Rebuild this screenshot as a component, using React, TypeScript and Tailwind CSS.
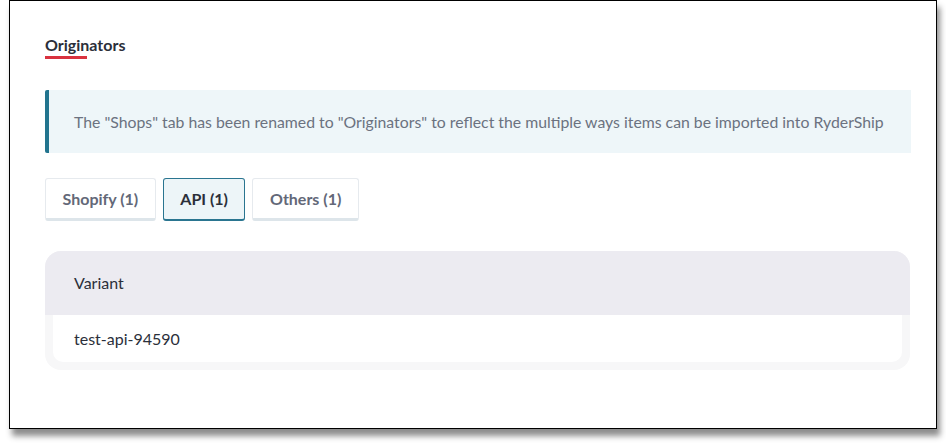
import React, { useState } from 'react';

const TABS = [
  { id: 'shopify', label: 'Shopify (1)' },
  { id: 'api', label: 'API (1)' },
  { id: 'others', label: 'Others (1)' },
];

const App: React.FC = () => {
  const [active, setActive] = useState('api');

  return (
    <div className="w-[946px] h-[447px] bg-white overflow-hidden" style={{ fontFamily: 'Lato, "Noto Sans", sans-serif' }}>
      <div className="ml-[9px] w-[928px] h-[429px] border border-black bg-white shadow-[3px_7px_6px_rgba(0,0,0,0.45)] pl-[35px] pr-[25px] pt-[35px]">
        <div className="w-fit">
          <h2 className="text-[16px] leading-[18px] font-bold text-[#2b2f3a]">Originators</h2>
          <div className="mt-[2px] h-[3px] w-[42px] bg-[#d9323f]" />
        </div>

        <div className="mt-[31px] h-[63px] bg-[#eef6f9] border-l-[4px] border-[#22748e] rounded-l-[2px] flex items-center pl-[25px]">
          <p className="text-[15.8px] text-[#6b7280] whitespace-nowrap">
            The "Shops" tab has been renamed to "Originators" to reflect the multiple ways items can be imported into RyderShip
          </p>
        </div>

        <div className="mt-[25px] flex gap-[7px]">
          {TABS.map((t) => (
            <button
              key={t.id}
              onClick={() => setActive(t.id)}
              className={`h-[43px] px-[16.5px] rounded-[3px] border text-[16px] font-bold ${
                t.id === active
                  ? 'bg-[#edf5f8] border-[#2a7590] border-b-[2px] text-[#2b2f3a]'
                  : 'bg-white border-[#e6eaee] border-b-[3px] border-b-[#dde5ea] text-[#636878]'
              }`}
            >
              {t.label}
            </button>
          ))}
        </div>

        <div className="mt-[30px] w-[865px] rounded-[16px] bg-[#f7f7f8] overflow-hidden pb-[8px]">
          <div className="h-[64px] bg-[#ecebf1] flex items-center pl-[29px] text-[16px] text-[#2b2f3a]">Variant</div>
          <div className="mx-[8px] h-[47px] bg-white rounded-b-[10px] flex items-center pl-[21px] text-[16px] text-[#2b2f3a]">
            test-api-94590
          </div>
        </div>
      </div>
    </div>
  );
};

export default App;
